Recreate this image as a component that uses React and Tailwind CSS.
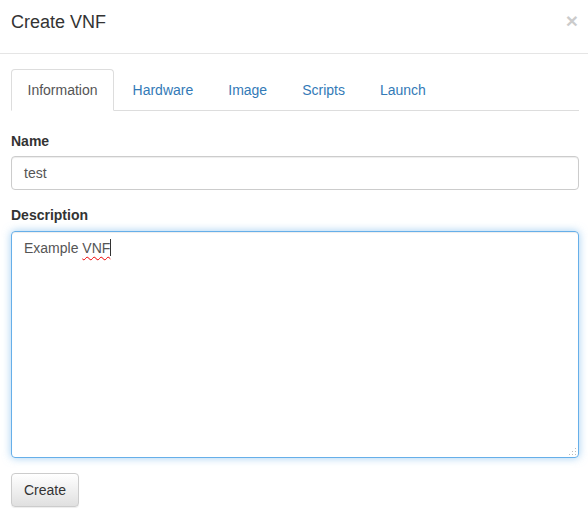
import React from "react";

const tabs = ["Information", "Hardware", "Image", "Scripts", "Launch"];

export default function App() {
    return (
        <div
            className="w-[588px] h-[519px] bg-white text-[14px] text-[#333] overflow-hidden"
            style={{ fontFamily: '"Liberation Sans", Arial, sans-serif' }}
        >
            {/* Header */}
            <div className="h-[54px] border-b border-[#e5e5e5] pl-[11px] pr-[10px] flex items-start justify-between">
                <h4 className="mt-[9px] text-[18px] leading-[26px] text-[#333]">Create VNF</h4>
                <button className="mt-[10px] text-[21px] leading-[21px] font-bold text-black opacity-20">
                    ×
                </button>
            </div>

            {/* Body */}
            <div className="pt-[15px] pl-[11px] pr-[9px]">
                {/* Tabs */}
                <ul className="flex border-b border-[#ddd]">
                    {tabs.map((t, i) =>
                        i === 0 ? (
                            <li key={t} className="-mb-px mr-[2px]">
                                <span className="block px-[15.5px] py-[10px] leading-[20px] text-[#555] bg-white border border-[#ddd] border-b-transparent rounded-t-[4px]">
                                    {t}
                                </span>
                            </li>
                        ) : (
                            <li key={t} className="-mb-px mr-[2px]">
                                <span className="block px-[15.5px] py-[10px] leading-[20px] text-[#337ab7] border border-transparent">
                                    {t}
                                </span>
                            </li>
                        )
                    )}
                </ul>

                {/* Form */}
                <div className="pt-[20px]">
                    <div className="mb-[15px]">
                        <label className="block mb-[5px] font-bold leading-[20px]">Name</label>
                        <div className="h-[34px] border border-[#ccc] rounded-[4px] px-[12px] py-[6px] leading-[20px] text-[#555] shadow-[inset_0_1px_1px_rgba(0,0,0,0.075)]">
                            test
                        </div>
                    </div>

                    <div className="mb-[15px]">
                        <label className="block mb-[6px] font-bold leading-[20px]">Description</label>
                        <div className="relative h-[227px] border border-[#66afe9] rounded-[4px] px-[12px] py-[6px] leading-[20px] text-[#555] shadow-[inset_0_1px_1px_rgba(0,0,0,0.075),0_0_8px_rgba(102,175,233,0.6)]">
                            Example{" "}
                            <span className="underline decoration-wavy decoration-[#e00] decoration-1 underline-offset-[3px]">
                                VNF
                            </span>
                            <span className="inline-block w-px h-[17px] bg-[#333] align-[-3px]" />
                            {/* resize grip */}
                            <svg
                                className="absolute right-[1px] bottom-[1px]"
                                width="9"
                                height="9"
                                viewBox="0 0 9 9"
                            >
                                <rect x="7" y="1" width="1" height="1" fill="#bbb" />
                                <rect x="4" y="4" width="1" height="1" fill="#bbb" />
                                <rect x="7" y="4" width="1" height="1" fill="#bbb" />
                                <rect x="1" y="7" width="1" height="1" fill="#bbb" />
                                <rect x="4" y="7" width="1" height="1" fill="#bbb" />
                                <rect x="7" y="7" width="1" height="1" fill="#bbb" />
                            </svg>
                        </div>
                    </div>

                    <button className="h-[34px] px-[12px] border border-[#ccc] rounded-[4px] text-[#333] leading-[20px] bg-gradient-to-b from-white to-[#e0e0e0] shadow-[inset_0_1px_0_rgba(255,255,255,0.15),0_1px_1px_rgba(0,0,0,0.075)]">
                        Create
                    </button>
                </div>
            </div>
        </div>
    );
}
